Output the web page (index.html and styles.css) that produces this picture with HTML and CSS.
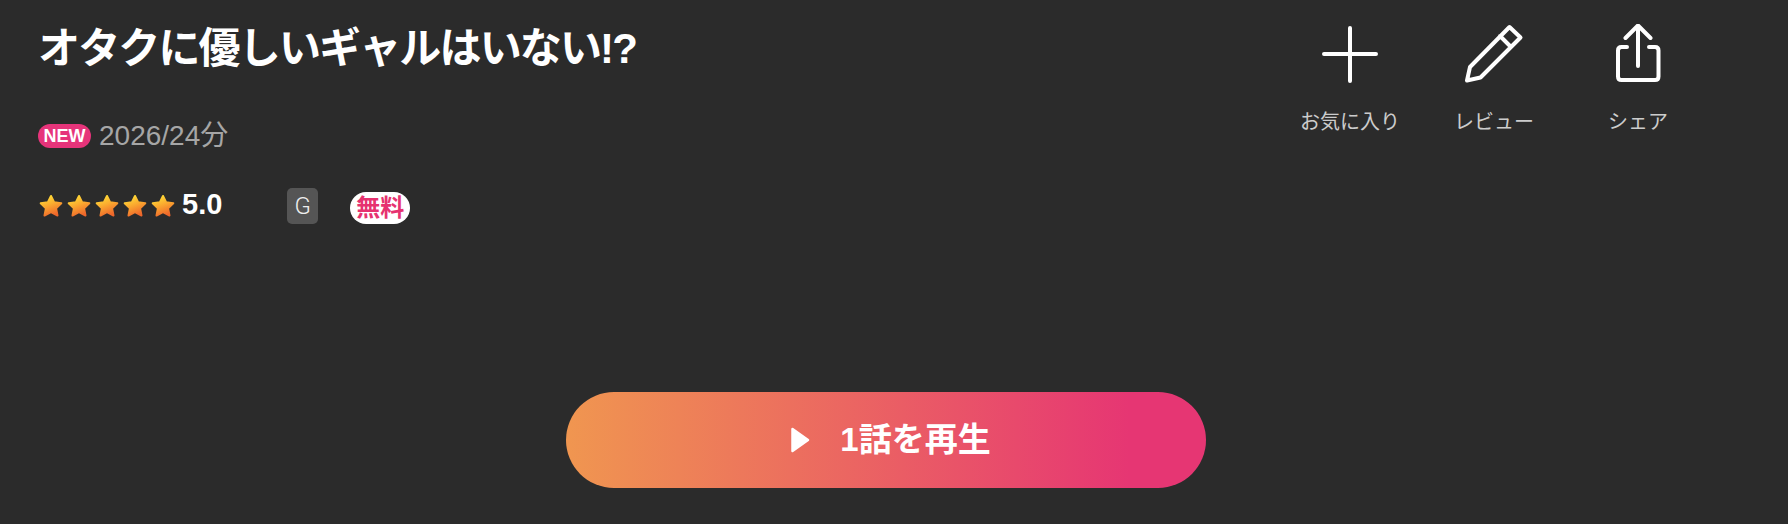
FILE: index.html
```html
<!DOCTYPE html>
<html lang="ja">
<head>
    <meta charset="UTF-8">
    <title>オタクに優しいギャルはいない!?</title>
    <link rel="stylesheet" href="styles.css">
</head>
<body>
    <svg class="defs" width="0" height="0">
        <defs>
            <linearGradient id="star-fill" x1="0.2" y1="0" x2="0.6" y2="1">
                <stop offset="0" stop-color="#ffe136"/>
                <stop offset="0.5" stop-color="#faa62f"/>
                <stop offset="1" stop-color="#ee662b"/>
            </linearGradient>
            <polygon id="star" fill="url(#star-fill)" stroke="url(#star-fill)" points="12,2 15.100,8.300 22.300,9.300 17.100,14.400 18.500,21.500 12,18.100 5.500,21.500 6.900,14.400 1.700,9.300 8.900,8.300"/>
        </defs>
    </svg>

    <main class="detail">
        <div class="top">
            <div class="info">
                <h1 class="title">オタクに優しいギャルはいない!?</h1>
                <div class="meta">
                    <span class="new-badge">NEW</span>
                    <span class="meta-text">2026/24分</span>
                </div>
                <div class="rating-row">
                    <div class="stars">
                        <svg class="star" viewBox="0 0 24 24"><use href="#star"/></svg>
                        <svg class="star" viewBox="0 0 24 24"><use href="#star"/></svg>
                        <svg class="star" viewBox="0 0 24 24"><use href="#star"/></svg>
                        <svg class="star" viewBox="0 0 24 24"><use href="#star"/></svg>
                        <svg class="star" viewBox="0 0 24 24"><use href="#star"/></svg>
                    </div>
                    <span class="score">5.0</span>
                    <span class="age-badge">G</span>
                    <span class="free-badge">無料</span>
                </div>
            </div>

            <ul class="actions">
                <li class="action">
                    <svg class="action-icon" viewBox="0 0 60 60">
                        <path d="M30 4V57M4 30H56"/>
                    </svg>
                    <span>お気に入り</span>
                </li>
                <li class="action">
                    <svg class="action-icon" viewBox="0 0 60 60">
                        <path d="M3 56.500L6 43L45.500 3L56.500 13.500L16.500 53.500ZM36 12L47 23"/>
                    </svg>
                    <span>レビュー</span>
                </li>
                <li class="action">
                    <svg class="action-icon" viewBox="0 0 60 60">
                        <path d="M30 2V42M17.500 14L30 1.500L42.500 14M19 23H13.500Q10 23 10 26.500V52.500Q10 56 13.500 56H47Q50.500 56 50.500 52.500V26.500Q50.500 23 47 23H41"/>
                    </svg>
                    <span>シェア</span>
                </li>
            </ul>
        </div>

        <button class="play-btn">
            <svg class="play-icon" viewBox="0 0 20 26">
                <path d="M2.500 2L18 13L2.500 24Z"/>
            </svg>
            <span class="play-label">1話を再生</span>
        </button>
    </main>
</body>
</html>
```

FILE: styles.css
```css
* {
    box-sizing: border-box;
}

body {
    margin: 0;
    height: 524px;
    overflow: hidden;
    background-color: #2b2b2b;
    color: #fff;
    font-family: "Liberation Sans", "Noto Sans CJK JP", sans-serif;
}

.defs {
    display: block;
    height: 0;
}

.detail {
    padding: 24px 78px 0 38px;
}

.top {
    display: flex;
    justify-content: space-between;
    height: 368px;
}

.title {
    margin: 0;
    font-size: 42px;
    line-height: 50px;
    letter-spacing: -1.850px;
    font-weight: 700;
}

/* NEW + 年/分数 */
.meta {
    display: flex;
    align-items: flex-start;
    gap: 8px;
    margin-top: 50px;
    height: 26px;
}

.new-badge {
    display: flex;
    align-items: center;
    justify-content: center;
    width: 53px;
    height: 24px;
    border-radius: 12px;
    background-color: #e6347a;
    font-size: 18px;
    font-weight: 700;
}

.meta-text {
    font-size: 28px;
    line-height: 24px;
    color: #a6a6a6;
}

.rating-row {
    display: flex;
    align-items: center;
    margin-top: 37px;
    height: 38px;
}

.stars {
    display: flex;
    gap: 4px;
    margin-left: 1px;
}

.star {
    display: block;
    width: 24px;
    height: 24px;
    stroke-width: 2;
    stroke-linejoin: round;
}

.score {
    margin-left: 7px;
    margin-bottom: 4px;
    font-size: 29px;
    font-weight: 700;
}

.age-badge {
    display: flex;
    align-items: center;
    justify-content: center;
    width: 31px;
    height: 36px;
    margin-left: 65px;
    border-radius: 5px;
    background-color: #555;
    font-family: Roboto, sans-serif;
    font-size: 24px;
    font-weight: 300;
    color: #eee;
}

.free-badge {
    display: flex;
    align-items: center;
    justify-content: center;
    width: 60px;
    height: 32px;
    margin-left: 32px;
    margin-top: 4px;
    border-radius: 16px;
    background-color: #fff;
    color: #e6326f;
    font-size: 24px;
    line-height: 28px;
    font-weight: 700;
}

.actions {
    display: flex;
    list-style: none;
    margin: 0;
    padding: 0;
}

.action {
    display: flex;
    flex-direction: column;
    align-items: center;
    width: 144px;
    font-size: 20px;
    line-height: 28px;
    color: #ccc;
}

.action-icon {
    display: block;
    width: 60px;
    height: 60px;
    margin-bottom: 24px;
    fill: none;
    stroke: #fff;
    stroke-width: 4;
    stroke-linecap: round;
    stroke-linejoin: round;
}

.play-btn {
    display: flex;
    align-items: center;
    justify-content: center;
    gap: 30px;
    width: 640px;
    height: 96px;
    margin-left: 528px;
    padding: 0 0 0 9px;
    border: none;
    border-radius: 48px;
    background: linear-gradient(90deg, #f09650 0%, #e63673 88%);
    color: #fff;
    font-family: inherit;
    font-size: 33px;
    font-weight: 700;
}

.play-label {
    margin-bottom: 6px;
}

.play-icon {
    display: block;
    width: 20px;
    height: 26px;
    fill: #fff;
    stroke: #fff;
    stroke-width: 2.500;
    stroke-linejoin: round;
}
```
